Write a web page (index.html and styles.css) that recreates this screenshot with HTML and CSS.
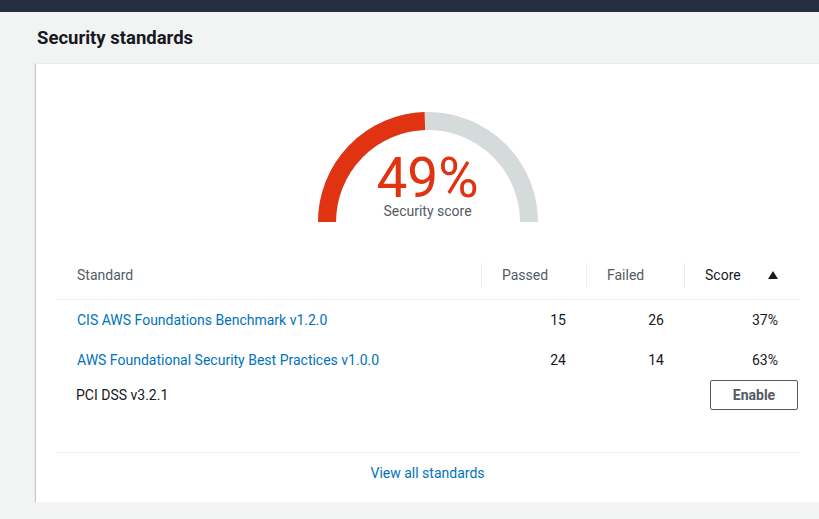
FILE: index.html
```html
<!DOCTYPE html>
<html lang="en">
<head>
<meta charset="utf-8">
<title>Security standards</title>
<link rel="stylesheet" href="styles.css">
</head>
<body>
<div class="topbar"></div>
<main class="page">
  <h2 class="title">Security standards</h2>
  <section class="card">
    <div class="gauge">
      <svg class="gauge-svg" width="220" height="110" viewBox="0 0 220 110">
        <path d="M 9 110 A 101 101 0 0 1 211 110" fill="none" stroke="#d5dbdb" stroke-width="18"/>
        <path d="M 9 110 A 101 101 0 0 1 106.83 9.05" fill="none" stroke="#df3312" stroke-width="18"/>
      </svg>
      <div class="gauge-label">
        <div class="gauge-value">49%</div>
        <div class="gauge-caption">Security score</div>
      </div>
    </div>
    <div class="table">
      <div class="row head">
        <div class="cell">Standard</div>
        <div class="cell sep">Passed</div>
        <div class="cell sep">Failed</div>
        <div class="cell sep sorted">Score <span class="tri"></span></div>
      </div>
      <div class="row">
        <div class="cell"><a class="link" href="#">CIS AWS Foundations Benchmark v1.2.0</a></div>
        <div class="cell num">15</div>
        <div class="cell num">26</div>
        <div class="cell num">37%</div>
      </div>
      <div class="row">
        <div class="cell"><a class="link" href="#">AWS Foundational Security Best Practices v1.0.0</a></div>
        <div class="cell num">24</div>
        <div class="cell num">14</div>
        <div class="cell num">63%</div>
      </div>
      <div class="row btnrow">
        <div class="cell plain">PCI DSS v3.2.1</div>
        <div class="cell"></div>
        <div class="cell"></div>
        <div class="cell num"><button class="btn">Enable</button></div>
      </div>
    </div>
    <div class="footer"><a class="link" href="#">View all standards</a></div>
  </section>
</main>
</body>
</html>
```
FILE: styles.css
```css
* { box-sizing: border-box; }
html, body { margin: 0; padding: 0; }
body {
  background: #f2f3f3;
  font-family: Roboto, "Noto Sans", sans-serif;
  color: #16191f;
  font-size: 14px;
  overflow: hidden;
}
.topbar { height: 12px; background: #232f3e; }
.page { padding-left: 36px; }
.title {
  margin: 15px 0 14px 1px;
  font-size: 18.5px;
  line-height: 22px;
  font-weight: 700;
  color: #16191f;
}
.card {
  width: 783px;
  background: #fff;
  border-top: 1px solid #eaeded;
  box-shadow: 0 1px 1px 0 rgba(0,28,36,.3), 1px 1px 1px 0 rgba(0,28,36,.15), -1px 1px 1px 0 rgba(0,28,36,.15);
  padding: 0 20px;
}
.gauge {
  position: relative;
  width: 220px;
  height: 110px;
  margin: 48px auto 0;
}
.gauge-svg { display: block; }
.gauge-label {
  position: absolute;
  left: 0; right: 0; top: 42px;
  text-align: center;
}
.gauge-value {
  font-size: 55px;
  line-height: 48px;
  color: #df3312;
}
.gauge-caption {
  font-size: 14px;
  line-height: 18px;
  color: #545b64;
}
.table { margin-top: 37px; }
.row {
  display: grid;
  grid-template-columns: 425px 105px 98px 114px;
  align-items: center;
  height: 40px;
}
.row.head { border-bottom: 1px solid #eaeded; height: 41px; padding-bottom: 8px; }
.row.btnrow { height: 30px; }
.cell { padding: 0 20px 0 21px; line-height: 20px; position: relative; }
.head .cell { color: #545b64; }
.head .cell.sorted { color: #16191f; display: flex; justify-content: space-between; align-items: center; }
.sep::before {
  content: "";
  position: absolute;
  left: 0; top: -2px;
  width: 1px; height: 24px;
  background: #eaeded;
}
.tri {
  width: 0; height: 0;
  border-left: 5px solid transparent;
  border-right: 5px solid transparent;
  border-bottom: 8px solid #16191f;
}
.num { text-align: right; }
.plain { padding-left: 20px; }
.link { color: #0073bb; text-decoration: none; }
.btn {
  width: 88px;
  height: 30px;
  margin-right: -20px;
  background: #fff;
  border: 1px solid #545b64;
  border-radius: 2px;
  font-family: inherit;
  font-size: 14px;
  font-weight: 700;
  color: #545b64;
  padding: 0;
}
.footer {
  margin-top: 42px;
  border-top: 1px solid #eaeded;
  padding: 10px 0 19px;
  text-align: center;
  line-height: 20px;
}
```
